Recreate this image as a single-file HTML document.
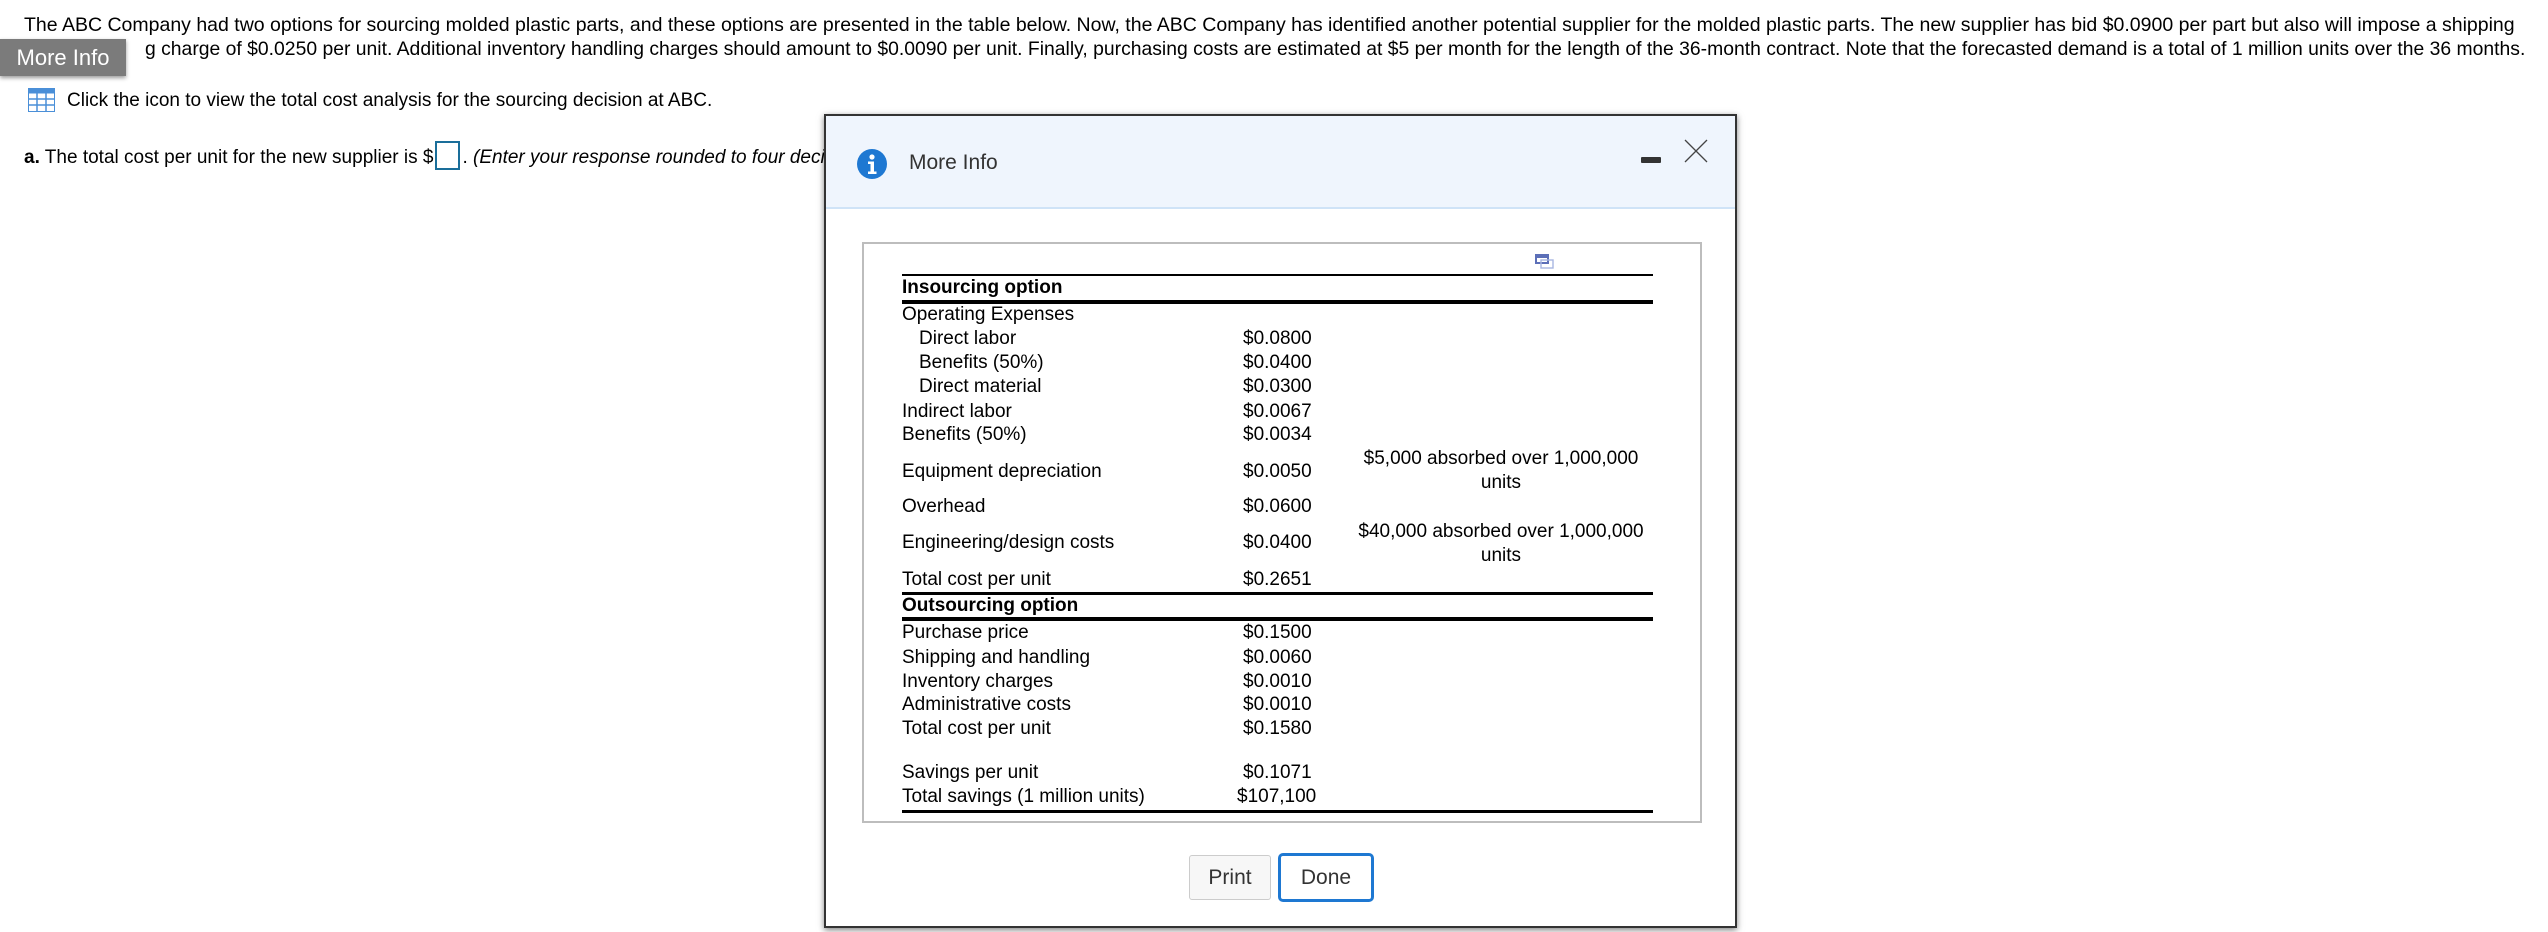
<!DOCTYPE html>
<html><head><meta charset="utf-8"><style>
body{margin:0;width:2548px;height:932px;background:#fff;font-family:"Liberation Sans",Arial,sans-serif;color:#000;position:relative;overflow:hidden}
.a{position:absolute;white-space:nowrap}
.t{font-size:19px;line-height:24px}
.r{position:absolute;font-size:19px;line-height:24px;white-space:nowrap;transform:translateY(-12px)}
.ln{position:absolute;left:902px;width:751px;background:#000}
</style></head><body>
<div class="a" style="left:24px;top:13px;font-size:19.5px;line-height:24px">The ABC Company had two options for sourcing molded plastic parts, and these options are presented in the table below. Now, the ABC Company has identified another potential supplier for the molded plastic parts. The new supplier has bid $0.0900 per part but also will impose a shipping</div>
<div class="a" style="left:145px;top:37px;font-size:19.35px;line-height:24px">g charge of $0.0250 per unit. Additional inventory handling charges should amount to $0.0090 per unit. Finally, purchasing costs are estimated at $5 per month for the length of the 36-month contract. Note that the forecasted demand is a total of 1 million units over the 36 months.</div>
<div class="a" style="left:0;top:39px;width:126px;height:37px;background:#7b7b7b;color:#fff;font-size:22px;line-height:37px;text-align:center;box-shadow:0 2px 4px rgba(0,0,0,.4)">More Info</div>
<svg class="a" style="left:28px;top:88px" width="27" height="24" viewBox="0 0 27 24"><rect x="0.5" y="0.5" width="26" height="23" fill="#fff" stroke="#4a8fd8"/><rect x="0.5" y="0.5" width="26" height="5" fill="#4a8fd8"/><g stroke="#4a8fd8" stroke-width="1.5"><line x1="9" y1="5" x2="9" y2="24"/><line x1="18" y1="5" x2="18" y2="24"/><line x1="0" y1="11" x2="27" y2="11"/><line x1="0" y1="17" x2="27" y2="17"/></g></svg>
<div class="a t" style="left:67px;top:89px">Click the icon to view the total cost analysis for the sourcing decision at ABC.</div>
<div class="a t" style="left:24px;top:141px"><b>a.</b> The total cost per unit for the new supplier is $<span style="display:inline-block;width:21px;height:25px;border:2px solid #1a6e9a;vertical-align:-7px;margin:0 2px"></span>. <i>(Enter your response rounded to four decimal places.)</i></div>

<div class="a" style="left:824px;top:114px;width:909px;height:810px;background:#fff;border:2px solid #333;box-shadow:0 2px 6px rgba(0,0,0,.5)">
 <div style="position:absolute;left:0;top:0;width:909px;height:91px;background:#eff5fd;border-bottom:2px solid #cfe3f7"></div>
 <svg style="position:absolute;left:31px;top:33px" width="30" height="30" viewBox="0 0 30 30"><circle cx="15" cy="15" r="15" fill="#1e78d2"/><circle cx="15" cy="8" r="2.6" fill="#fff"/><path d="M11 12.5h6v10h2.5v2.5h-8.5v-2.5h2.5v-7.5h-2.5z" fill="#fff"/></svg>
 <div class="a" style="left:83px;top:35px;font-size:21px;color:#333">More Info</div>
 <div class="a" style="left:815px;top:41px;width:20px;height:6px;background:#333;border-radius:1px"></div>
 <svg style="position:absolute;left:858px;top:23px" width="24" height="24"><path d="M1 1L23 23M23 1L1 23" stroke="#444" stroke-width="1.3"/></svg>
 <div class="a" style="left:36px;top:126px;width:836px;height:577px;border:2px solid #bdbdbd"></div>
</div>
<svg class="a" style="left:1535px;top:254px" width="19" height="15"><rect x="1" y="1" width="12" height="8" fill="none" stroke="#5c6fb8" stroke-width="2"/><rect x="1" y="1" width="12" height="3" fill="#5c6fb8"/><rect x="6" y="6" width="12" height="8" fill="none" stroke="#a8b6e0" stroke-width="1.4"/></svg>
<div class="ln" style="top:274px;height:2px"></div>
<div class="ln" style="top:300px;height:4px"></div>
<div class="ln" style="top:592px;height:3px"></div>
<div class="ln" style="top:617px;height:4px"></div>
<div class="ln" style="top:810px;height:3px"></div>

<div class="r" style="left:902px;top:288px;font-weight:bold">Insourcing option</div>
<div class="r" style="left:902px;top:315px">Operating Expenses</div>
<div class="r" style="left:919px;top:339px">Direct labor</div>
<div class="r" style="left:919px;top:363px">Benefits (50%)</div>
<div class="r" style="left:919px;top:387px">Direct material</div>
<div class="r" style="left:902px;top:412px">Indirect labor</div>
<div class="r" style="left:902px;top:435px">Benefits (50%)</div>
<div class="r" style="left:902px;top:472px">Equipment depreciation</div>
<div class="r" style="left:902px;top:507px">Overhead</div>
<div class="r" style="left:902px;top:543px">Engineering/design costs</div>
<div class="r" style="left:902px;top:580px">Total cost per unit</div>
<div class="r" style="left:902px;top:606px;font-weight:bold">Outsourcing option</div>
<div class="r" style="left:902px;top:633px">Purchase price</div>
<div class="r" style="left:902px;top:658px">Shipping and handling</div>
<div class="r" style="left:902px;top:682px">Inventory charges</div>
<div class="r" style="left:902px;top:705px">Administrative costs</div>
<div class="r" style="left:902px;top:729px">Total cost per unit</div>
<div class="r" style="left:902px;top:773px">Savings per unit</div>
<div class="r" style="left:902px;top:797px">Total savings (1 million units)</div>

<div class="r" style="left:1243px;top:339px">$0.0800</div>
<div class="r" style="left:1243px;top:363px">$0.0400</div>
<div class="r" style="left:1243px;top:387px">$0.0300</div>
<div class="r" style="left:1243px;top:412px">$0.0067</div>
<div class="r" style="left:1243px;top:435px">$0.0034</div>
<div class="r" style="left:1243px;top:472px">$0.0050</div>
<div class="r" style="left:1243px;top:507px">$0.0600</div>
<div class="r" style="left:1243px;top:543px">$0.0400</div>
<div class="r" style="left:1243px;top:580px">$0.2651</div>
<div class="r" style="left:1243px;top:633px">$0.1500</div>
<div class="r" style="left:1243px;top:658px">$0.0060</div>
<div class="r" style="left:1243px;top:682px">$0.0010</div>
<div class="r" style="left:1243px;top:705px">$0.0010</div>
<div class="r" style="left:1243px;top:729px">$0.1580</div>
<div class="r" style="left:1243px;top:773px">$0.1071</div>
<div class="r" style="left:1237px;top:797px">$107,100</div>

<div class="a" style="left:1351px;top:447px;width:300px;text-align:center;font-size:19px;line-height:24px">$5,000 absorbed over 1,000,000<br>units</div>
<div class="a" style="left:1351px;top:520px;width:300px;text-align:center;font-size:19px;line-height:24px">$40,000 absorbed over 1,000,000<br>units</div>

<div class="a" style="left:1189px;top:855px;width:80px;height:43px;border:1px solid #ccc;border-radius:3px;background:#f7f7f7;font-size:21px;line-height:43px;text-align:center;color:#333">Print</div>
<div class="a" style="left:1278px;top:853px;width:90px;height:43px;border:3px solid #1e78d2;border-radius:5px;background:#fff;font-size:21px;line-height:43px;text-align:center;color:#333">Done</div>
</body></html>
